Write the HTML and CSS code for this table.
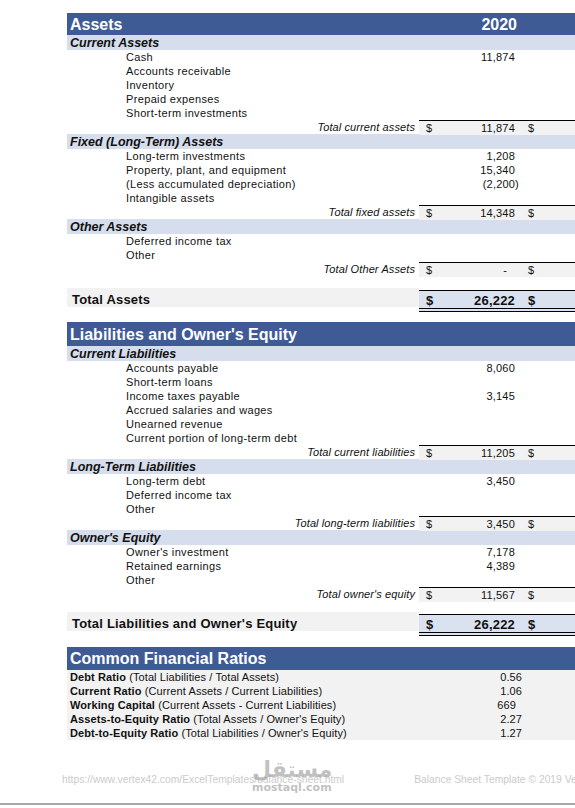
FILE: index.html
```html
<!DOCTYPE html>
<html lang="en">
<head>
  <meta charset="UTF-8">
  <title>Balance Sheet</title>
  <link rel="stylesheet" href="styles.css">
</head>
<body>
  <div class="sheet">

    <div class="head">
      <div class="cell">Assets</div>
      <div class="cell year">2020</div>
      <div class="cell"></div>
    </div>

    <div class="band">Current Assets</div>
    <div class="row"><div class="item">Cash</div><div class="val"><span></span><span>11,874</span></div><div></div></div>
    <div class="row"><div class="item">Accounts receivable</div><div class="val"></div><div></div></div>
    <div class="row"><div class="item">Inventory</div><div class="val"></div><div></div></div>
    <div class="row"><div class="item">Prepaid expenses</div><div class="val"></div><div></div></div>
    <div class="row"><div class="item">Short-term investments</div><div class="val"></div><div></div></div>
    <div class="row total"><div class="tlabel">Total current assets</div><div class="val"><span>$</span><span>11,874</span></div><div class="tail">$</div></div>

    <div class="band">Fixed (Long-Term) Assets</div>
    <div class="row"><div class="item">Long-term investments</div><div class="val"><span></span><span>1,208</span></div><div></div></div>
    <div class="row"><div class="item">Property, plant, and equipment</div><div class="val"><span></span><span>15,340</span></div><div></div></div>
    <div class="row"><div class="item">(Less accumulated depreciation)</div><div class="val"><span></span><span class="neg">(2,200)</span></div><div></div></div>
    <div class="row"><div class="item">Intangible assets</div><div class="val"></div><div></div></div>
    <div class="row total"><div class="tlabel">Total fixed assets</div><div class="val"><span>$</span><span>14,348</span></div><div class="tail">$</div></div>

    <div class="band">Other Assets</div>
    <div class="row"><div class="item">Deferred income tax</div><div class="val"></div><div></div></div>
    <div class="row"><div class="item">Other</div><div class="val"></div><div></div></div>
    <div class="row total"><div class="tlabel">Total Other Assets</div><div class="val"><span>$</span><span class="nil">-</span></div><div class="tail">$</div></div>

    <div class="grand first">
      <div class="glabel">Total Assets</div>
      <div class="gval"><span>$</span><span>26,222</span></div>
      <div class="gtail">$</div>
    </div>

    <div class="head big">
      <div class="cell">Liabilities and Owner's Equity</div>
    </div>

    <div class="band">Current Liabilities</div>
    <div class="row"><div class="item">Accounts payable</div><div class="val"><span></span><span>8,060</span></div><div></div></div>
    <div class="row"><div class="item">Short-term loans</div><div class="val"></div><div></div></div>
    <div class="row"><div class="item">Income taxes payable</div><div class="val"><span></span><span>3,145</span></div><div></div></div>
    <div class="row"><div class="item">Accrued salaries and wages</div><div class="val"></div><div></div></div>
    <div class="row"><div class="item">Unearned revenue</div><div class="val"></div><div></div></div>
    <div class="row"><div class="item">Current portion of long-term debt</div><div class="val"></div><div></div></div>
    <div class="row total"><div class="tlabel">Total current liabilities</div><div class="val"><span>$</span><span>11,205</span></div><div class="tail">$</div></div>

    <div class="band">Long-Term Liabilities</div>
    <div class="row"><div class="item">Long-term debt</div><div class="val"><span></span><span>3,450</span></div><div></div></div>
    <div class="row"><div class="item">Deferred income tax</div><div class="val"></div><div></div></div>
    <div class="row"><div class="item">Other</div><div class="val"></div><div></div></div>
    <div class="row total"><div class="tlabel">Total long-term liabilities</div><div class="val"><span>$</span><span>3,450</span></div><div class="tail">$</div></div>

    <div class="band">Owner's Equity</div>
    <div class="row"><div class="item">Owner's investment</div><div class="val"><span></span><span>7,178</span></div><div></div></div>
    <div class="row"><div class="item">Retained earnings</div><div class="val"><span></span><span>4,389</span></div><div></div></div>
    <div class="row"><div class="item">Other</div><div class="val"></div><div></div></div>
    <div class="row total"><div class="tlabel">Total owner's equity</div><div class="val"><span>$</span><span>11,567</span></div><div class="tail">$</div></div>

    <div class="grand second">
      <div class="glabel">Total Liabilities and Owner's Equity</div>
      <div class="gval"><span>$</span><span>26,222</span></div>
      <div class="gtail">$</div>
    </div>

    <div class="head ratios-head">
      <div class="cell">Common Financial Ratios</div>
    </div>

    <div class="ratios">
      <div class="ratio"><div><b>Debt Ratio</b> (Total Liabilities / Total Assets)</div><div class="rval">0.56</div></div>
      <div class="ratio"><div><b>Current Ratio</b> (Current Assets / Current Liabilities)</div><div class="rval">1.06</div></div>
      <div class="ratio"><div><b>Working Capital</b> (Current Assets - Current Liabilities)</div><div class="rval int">669</div></div>
      <div class="ratio"><div><b>Assets-to-Equity Ratio</b> (Total Assets / Owner's Equity)</div><div class="rval">2.27</div></div>
      <div class="ratio"><div><b>Debt-to-Equity Ratio</b> (Total Liabilities / Owner's Equity)</div><div class="rval">1.27</div></div>
    </div>
  </div>

  <div class="footer">
    <span class="url">https://www.vertex42.com/ExcelTemplates/balance-sheet.html</span>
    <span class="copy">Balance Sheet Template © 2019 Vertex42.com</span>
    <div class="mark">
      <div class="mark-ar">مستقل</div>
      <div class="mark-en">mostaql.com</div>
    </div>
  </div>
  <div class="page-edge"></div>
</body>
</html>
```

FILE: styles.css
```css
body {
  margin: 0;
  width: 575px;
  overflow: hidden;
  background-color: #ffffff;
  font-family: "Liberation Sans", Arial, sans-serif;
  color: #111;
}

.sheet {
  margin: 13px 0 0 67px;
  width: 508px;
}

/* blue section headers */
.head {
  display: grid;
  grid-template-columns: 352px 103px 1fr;
  height: 22px;
  line-height: 24px;
  background-color: #3f5b95;
  color: #ffffff;
  font-size: 16px;
  font-weight: bold;
}

.head .cell {
  padding-left: 3px;
  white-space: nowrap;
}

.head .year {
  text-align: right;
  padding-right: 5px;
}

.head.big {
  display: block;
  height: 24px;
  line-height: 26px;
}

.head.ratios-head {
  display: block;
  height: 23px;
  line-height: 23px;
  margin-top: 11px;
}

/* light blue sub headers */
.band {
  height: 15px;
  line-height: 17px;
  padding-left: 3px;
  background-color: #d6ddec;
  font-size: 12.5px;
  font-weight: bold;
  font-style: italic;
  overflow: hidden;
}

.row {
  display: grid;
  grid-template-columns: 352px 103px 1fr;
  height: 14px;
  line-height: 15px;
  font-size: 11px;
  letter-spacing: 0.35px;
}

.item {
  padding-left: 59px;
  white-space: nowrap;
}

.val {
  display: flex;
  justify-content: space-between;
  padding: 0 7px;
  letter-spacing: 0.2px;
}

.neg {
  margin-right: -4px;
}

.nil {
  margin-right: 8px;
}

.tail {
  padding-left: 6px;
}

.total .tlabel {
  text-align: right;
  padding-right: 4px;
  font-style: italic;
  letter-spacing: 0.1px;
}

.total .val,
.total .tail {
  background-color: #f2f2f2;
  border-top: 1px solid #000;
  line-height: 14px;
}

/* grand totals */
.grand {
  display: grid;
  grid-template-columns: 352px 103px 1fr;
  height: 24px;
  font-size: 13px;
  font-weight: bold;
  letter-spacing: 0.2px;
}

.grand.first {
  margin-top: 12px;
  margin-bottom: 10px;
}

.grand.second {
  margin-top: 11px;
}

.glabel {
  height: 19px;
  line-height: 23px;
  padding-left: 5px;
  background-color: #f2f2f2;
  white-space: nowrap;
}

.gval,
.gtail {
  margin-top: 2px;
  height: 17px;
  line-height: 19px;
  background-color: #dae2f0;
  border-top: 1px solid #000;
  border-bottom: 4px double #000;
}

.gval {
  display: flex;
  justify-content: space-between;
  padding: 0 7px;
}

.gtail {
  padding-left: 6px;
}

/* ratios */
.ratios {
  background-color: #f2f2f2;
  font-size: 11px;
  letter-spacing: 0.1px;
}

.ratio {
  display: grid;
  grid-template-columns: 352px 100px;
  height: 14px;
  line-height: 15px;
  padding-left: 3px;
  white-space: nowrap;
}

.rval {
  text-align: right;
}

.rval.int {
  padding-right: 6px;
}

.footer {
  position: relative;
  display: flex;
  margin-top: 34px;
  padding-left: 62px;
  height: 12px;
  line-height: 12px;
  font-size: 10.3px;
  color: #cbcbcb;
  white-space: nowrap;
}

.copy {
  margin-left: 70px;
}

.mark {
  position: absolute;
  left: 252px;
  top: -16px;
  width: 72px;
  text-align: center;
  color: rgba(140, 140, 140, 0.55);
  font-weight: bold;
}

.mark-ar {
  font-family: "DejaVu Sans", sans-serif;
  font-size: 22px;
  line-height: 24px;
}

.mark-en {
  font-family: "DejaVu Sans", sans-serif;
  font-size: 11px;
  line-height: 12px;
}

.page-edge {
  margin-top: 17px;
  height: 2px;
  background-color: #a8a8a8;
}
```
